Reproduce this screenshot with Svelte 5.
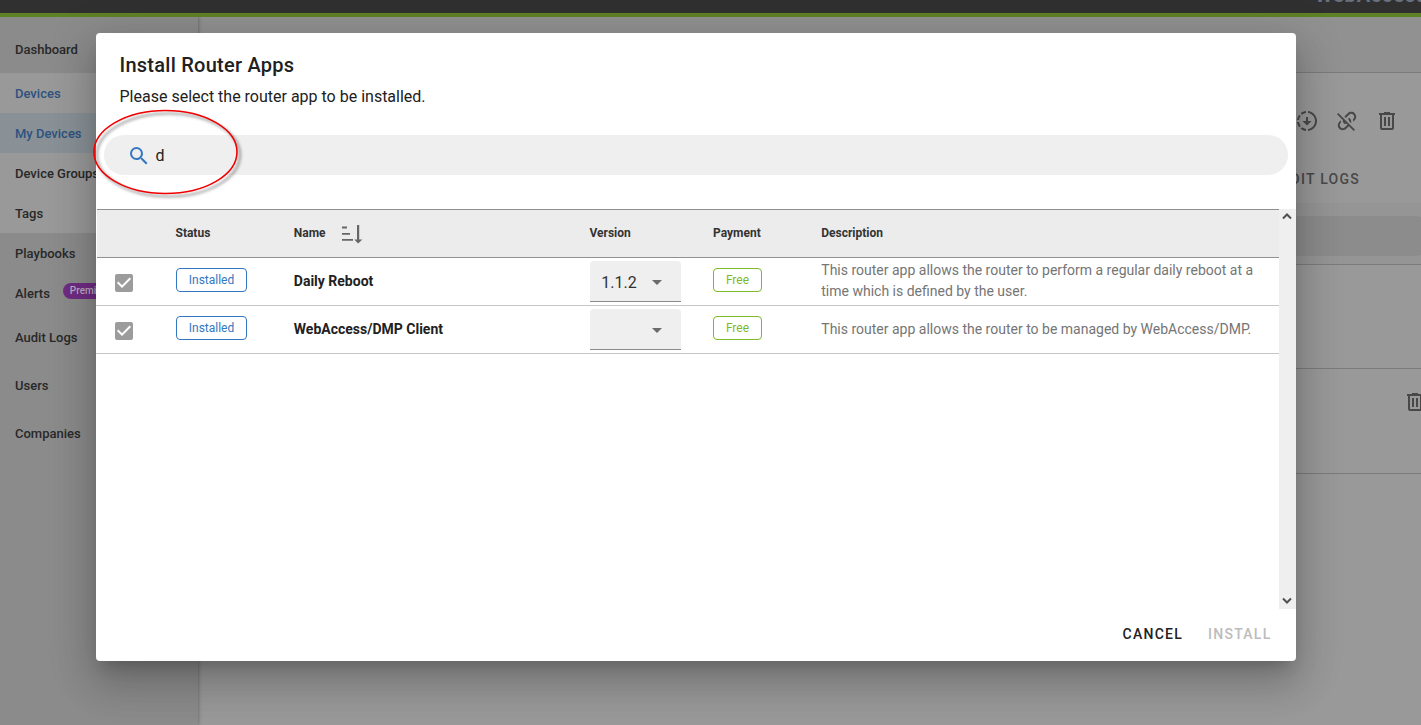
<script>
  const icons = {
    search: 'M9.5,3A6.5,6.5 0 0,1 16,9.5C16,11.11 15.41,12.59 14.44,13.73L14.71,14H15.5L20.5,19L19,20.5L14,15.5V14.71L13.73,14.44C12.59,15.41 11.11,16 9.5,16A6.5,6.5 0 0,1 3,9.5A6.5,6.5 0 0,1 9.5,3M9.5,5C7,5 5,7 5,9.5C5,12 7,14 9.5,14C12,14 14,12 14,9.5C14,7 12,5 9.5,5Z',
    trash: 'M9,3V4H4V6H5V19A2,2 0 0,0 7,21H17A2,2 0 0,0 19,19V6H20V4H15V3H9M7,6H17V19H7V6M9,8V17H11V8H9M13,8V17H15V8H13Z',
    unlink: 'M2,5.27L3.28,4L20,20.72L18.73,22L13.9,17.17L11.29,19.78C9.34,21.73 6.17,21.73 4.22,19.78C2.27,17.83 2.27,14.66 4.22,12.71L5.71,11.22C5.7,12.04 5.83,12.86 6.11,13.65L5.64,14.12C4.46,15.29 4.46,17.19 5.64,18.36C6.81,19.54 8.71,19.54 9.88,18.36L12.5,15.76L10.88,14.15C10.87,14.39 10.77,14.64 10.59,14.83C10.2,15.22 9.56,15.22 9.17,14.83C8.12,13.77 7.63,12.37 7.72,11L2,5.27M12.71,4.22C14.66,2.27 17.83,2.27 19.78,4.22C21.73,6.17 21.73,9.34 19.78,11.29L18.29,12.78C18.3,11.96 18.17,11.14 17.89,10.36L18.36,9.88C19.54,8.71 19.54,6.81 18.36,5.64C17.19,4.46 15.29,4.46 14.12,5.64L10.79,8.97L9.38,7.55L12.71,4.22M13.41,9.17C13.8,8.78 14.44,8.78 14.83,9.17C16.2,10.54 16.61,12.5 16.06,14.23L14.28,12.46C14.23,11.78 13.94,11.11 13.41,10.58C13,10.2 13,9.56 13.41,9.17Z',
    download: 'M13,2.03V2.05L13,4.05C17.39,4.59 20.5,8.58 19.96,12.97C19.5,16.61 16.64,19.5 13,19.93V21.93C18.5,21.38 22.5,16.5 21.95,11C21.5,6.25 17.73,2.5 13,2.03M11,2.06C9.05,2.25 7.19,3 5.67,4.26L7.1,5.74C8.22,4.84 9.57,4.26 11,4.06V2.06M4.26,5.67C3,7.19 2.25,9.04 2.05,11H4.05C4.24,9.58 4.8,8.23 5.69,7.1L4.26,5.67M2.06,13C2.26,14.96 3.03,16.81 4.27,18.33L5.69,16.9C4.81,15.77 4.24,14.42 4.06,13H2.06M7.1,18.37L5.67,19.74C7.18,21 9.04,21.79 11,22V20C9.58,19.82 8.23,19.25 7.1,18.37M12,16.5L7.5,12H11V8H13V12H16.5L12,16.5Z',
    checkbox: 'M10,17L5,12L6.41,10.58L10,14.17L17.59,6.58L19,8M19,3H5C3.89,3 3,3.89 3,5V19A2,2 0 0,0 5,21H19A2,2 0 0,0 21,19V5C21,3.89 20.1,3 19,3Z',
    down: 'M7,10L12,15L17,10H7Z'
  };
  const nav = [
    { label: 'Dashboard', kind: 'first' },
    { label: 'Devices', kind: 'open blue' },
    { label: 'My Devices', kind: 'open blue active' },
    { label: 'Device Groups', kind: 'open' },
    { label: 'Tags', kind: 'open' },
    { label: 'Playbooks', kind: '' },
    { label: 'Alerts', kind: '', badge: 'Premium' },
    { label: 'Audit Logs', kind: 'tall' },
    { label: 'Users', kind: 'tall' },
    { label: 'Companies', kind: 'tall' }
  ];
  const apps = [
    { name: 'Daily Reboot', version: '1.1.2', description: 'This router app allows the router to perform a regular daily reboot at a time which is defined by the user.' },
    { name: 'WebAccess/DMP Client', version: '', description: 'This router app allows the router to be managed by WebAccess/DMP.' }
  ];
</script>

{#snippet icon(name)}
  <svg class="icon" viewBox="0 0 24 24"><path d={icons[name]} /></svg>
{/snippet}

<div class="app">
  <header class="topbar"><span class="brand">WebAccess</span></header>
  <div class="body">
    <nav>
      {#each nav as item}
        <div class="item {item.kind}">
          <span>{item.label}</span>
          {#if item.badge}<span class="premium">{item.badge}</span>{/if}
        </div>
      {/each}
    </nav>
    <main>
      <div class="strip"></div>
      <div class="tools">{@render icon('download')}{@render icon('unlink')}{@render icon('trash')}</div>
      <div class="tabs">AUDIT LOGS</div>
      <div class="filter"><div class="pill"></div></div>
      <div class="block one"></div>
      <div class="block two">{@render icon('trash')}</div>
    </main>
  </div>

  <section class="dialog">
    <h1>Install Router Apps</h1>
    <p class="lead">Please select the router app to be installed.</p>
    <div class="search">{@render icon('search')}<span>d</span></div>
    <div class="scroller">
      <div class="table">
        <div class="row head">
          <span></span>
          <span>Status</span>
          <span class="sort">Name
            <svg width="22" height="20" viewBox="0 0 22 20"><path d="M0 2.5h5M0 8.8h8M0 14.8h11" class="line" /><path d="M15 0h2.2v14.4h3.2L16.1 18.4 12.3 14.4H15z" /></svg>
          </span>
          <span>Version</span>
          <span>Payment</span>
          <span>Description</span>
        </div>
        {#each apps as app}
          <div class="row">
            <span class="check">{@render icon('checkbox')}</span>
            <span class="cell"><span class="chip">Installed</span></span>
            <span class="name">{app.name}</span>
            <span class="cell"><span class="select"><span>{app.version}</span>{@render icon('down')}</span></span>
            <span class="cell"><span class="chip free">Free</span></span>
            <span class="desc">{app.description}</span>
          </div>
        {/each}
      </div>
      <div class="bar">
        <svg width="10" height="7" viewBox="0 0 10 7"><path d="M1 5.5l4-4 4 4" /></svg>
        <svg width="10" height="7" viewBox="0 0 10 7"><path d="M1 1.5l4 4 4-4" /></svg>
      </div>
    </div>
    <footer><span>CANCEL</span><span class="off">INSTALL</span></footer>
  </section>

  <svg class="ring" width="156" height="96" viewBox="0 0 156 96"><ellipse cx="75.5" cy="47" rx="71.5" ry="41.5" /></svg>
</div>

<style>
  :global(body) { overflow: hidden; }
  * { box-sizing: border-box; }
  .app { position: relative; width: 1421px; height: 725px; overflow: hidden; background: #999; font-family: Roboto, sans-serif; display: flex; flex-direction: column; }
  .icon { width: 24px; height: 24px; fill: currentColor; flex: none; display: block; }
  .topbar { height: 17px; flex: none; background: #303030; border-bottom: 4px solid #5f8125; display: flex; justify-content: flex-end; align-items: flex-end; overflow: hidden; }
  .brand { font-size: 20px; line-height: 20px; font-weight: 700; color: #68717f; height: 28px; width: 106px; letter-spacing: .8px; }
  .body { flex: 1; display: flex; min-height: 0; }
  nav { width: 198px; flex: none; background: #8b8b8b; box-shadow: 0 0 4px rgba(0,0,0,.4); z-index: 1; clip-path: inset(0 -8px 0 0); }
  .item { height: 40px; padding-left: 15px; display: flex; align-items: center; font-size: 13px; font-weight: 500; color: #282828; gap: 13px; }
  .first { height: 56px; padding-top: 9px; }
  .open { background: #999; }
  .blue { color: #2d527f; }
  .active { background: #899197; }
  .tall { height: 48px; }
  .premium { background: #702c84; color: #bba9c0; font-size: 10px; font-weight: 500; line-height: 16px; padding: 0 7px; border-radius: 8px; margin-top: -5px; }
  main { flex: 1; display: flex; flex-direction: column; color: #484848; min-width: 0; }
  .strip { height: 56px; background: #919191; border-bottom: 1px solid #7b7b7b; flex: none; }
  .tools { display: flex; justify-content: flex-end; gap: 16px; padding: 36px 22px 0 0; height: 90px; }
  .tabs { height: 40px; text-align: right; padding-right: 61px; line-height: 32px; font-size: 14px; font-weight: 500; letter-spacing: 1.25px; }
  .filter { background: #959595; height: 62px; border-bottom: 1px solid #7b7b7b; padding: 13px 0 8px; }
  .pill { background: #8c8c8c; height: 40px; border-radius: 20px; margin-right: -13px; }
  .block { border-bottom: 1px solid #7b7b7b; }
  .one { height: 104px; }
  .two { height: 105px; display: flex; justify-content: flex-end; padding-top: 21px; margin-right: -6px; }

  .dialog { position: absolute; z-index: 2; left: 96px; top: 33px; width: 1200px; height: 628px; background: #fff; border-radius: 4px; box-shadow: 0 11px 15px -7px rgba(0,0,0,.2), 0 24px 38px 3px rgba(0,0,0,.14), 0 9px 46px 8px rgba(0,0,0,.12); display: flex; flex-direction: column; color: #212121; }
  h1 { margin: 16px 0 0 23.5px; font-size: 20px; line-height: 32px; font-weight: 500; letter-spacing: .25px; }
  .lead { margin: 4px 0 0 23.5px; font-size: 16px; line-height: 24px; }
  .search { margin: 26px 8px 34px; height: 40px; flex: none; border-radius: 20px; background: #efefef; display: flex; align-items: center; padding-left: 23.4px; gap: 4px; color: #3477c2; }
  .search .icon { margin-top: 1px; }
  .search span { color: #212121; font-size: 16px; }
  .scroller { display: flex; height: 400px; flex: none; }
  .table { flex: 1; }
  .row { display: grid; grid-template-columns: 79.5px 118.3px 296px 123.2px 108.3px 1fr; height: 48px; align-items: center; border-bottom: 1px solid #c6c6c6; }
  .head { height: 49px; background: #ececec; border-top: 1px solid #909090; border-bottom: 1px solid #909090; font-size: 12px; font-weight: 700; color: #333; padding-bottom: 2px; margin-left: 1px; grid-template-columns: 78.5px 118.3px 295.7px 123.5px 108.3px 1fr; }
  .sort { display: flex; align-items: center; gap: 16px; }
  .sort svg { fill: #666; margin-top: 4px; }
  .line { stroke: #666; stroke-width: 1.8; }
  .check { padding: 3px 0 0 15.5px; color: #9c9c9c; }
  .cell { display: flex; }
  .chip { width: 71px; height: 24px; margin: 0 0 4px .5px; border: 1px solid #3477c2; border-radius: 4px; color: #3477c2; font-size: 12px; line-height: 22px; text-align: center; }
  .free { width: 49px; margin-left: 0; border-color: #80b928; color: #80b928; }
  .name { font-size: 14px; font-weight: 700; padding-bottom: 1px; }
  .select { width: 91px; height: 41px; background: #efefef; border-bottom: 1px solid #8b8b8b; border-radius: 4px 4px 0 0; display: flex; align-items: center; justify-content: space-between; padding: 2px 12px 0 11.5px; font-size: 16px; color: #333; }
  .select .icon { color: #6b6b6b; }
  .desc { color: #757575; font-size: 14px; line-height: 21px; padding-right: 16px; padding-bottom: 1px; }
  .bar { width: 17px; background: #efefef; display: flex; flex-direction: column; justify-content: space-between; align-items: center; padding: 4px 1px 5px 0; }
  .bar path { fill: none; stroke: #505050; stroke-width: 2; }
  footer { display: flex; justify-content: flex-end; gap: 25px; padding: 15px 24.5px 0 0; font-size: 14px; line-height: 20px; font-weight: 500; letter-spacing: 1.25px; }
  .off { color: #bcbcbc; }
  .ring { position: absolute; z-index: 3; left: 90px; top: 105px; filter: drop-shadow(3px 3px 1.5px rgba(0,0,0,.5)); }
  .ring ellipse { fill: none; stroke: #f00000; stroke-width: 1.6; }
</style>
